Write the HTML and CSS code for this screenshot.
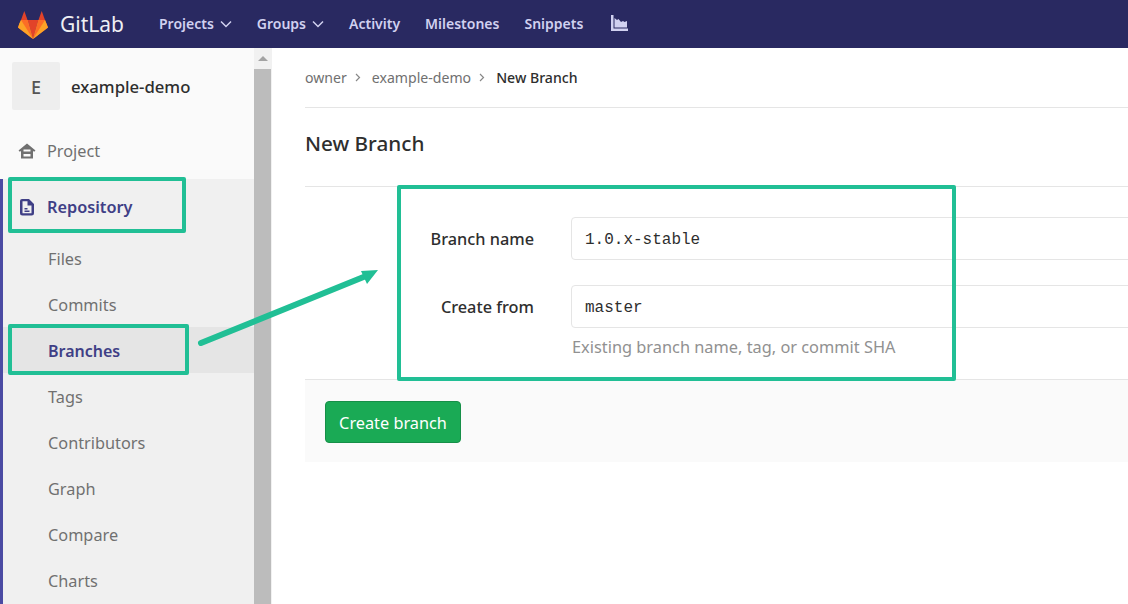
FILE: index.html
```html
<!DOCTYPE html>
<html lang="en">

<head>
    <meta charset="UTF-8">
    <meta name="viewport" content="width=device-width, initial-scale=1.0">
    <title>New Branch</title>
    <link rel="stylesheet" href="styles.css">
</head>

<body>
    <header class="navbar">
        <a class="brand">
            <svg class="brand-logo" width="30" height="28" viewBox="0 0 30 28">
                <path fill="#fc6d26" d="M15 28 0 16.5 3 9z"/>
                <path fill="#fc6d26" d="M15 28 30 16.5 27 9z"/>
                <path fill="#e24329" d="M15 28 9.5 9h11z"/>
                <path fill="#fca326" d="M15 28 0 16.5 1.200 12.800 3 9 9.500 9z"/>
                <path fill="#fc6d26" d="M15 28 3 9h6.500z"/>
                <path fill="#fca326" d="M15 28 30 16.500 27 9 20.500 9z"/>
                <path fill="#fc6d26" d="M15 28 27 9h-6.500z"/>
                <path fill="#e24329" d="M3 9 6.300 0 9.500 9z"/>
                <path fill="#e24329" d="M27 9 23.700 0 20.500 9z"/>
            </svg>
            <span class="brand-name">GitLab</span>
        </a>
        <nav class="nav-links">
            <a>Projects <svg class="chev" width="12" height="8" viewBox="0 0 12 8"><path d="M1 1.500 6 6.500 11 1.500" fill="none" stroke="currentColor" stroke-width="1.500"/></svg></a>
            <a>Groups <svg class="chev" width="12" height="8" viewBox="0 0 12 8"><path d="M1 1.500 6 6.500 11 1.500" fill="none" stroke="currentColor" stroke-width="1.500"/></svg></a>
            <a>Activity</a>
            <a>Milestones</a>
            <a>Snippets</a>
            <a class="chart-link">
                <svg width="17" height="16" viewBox="0 0 17 16"><path fill="currentColor" d="M0 0h2.500v13.500H17V16H0z"/><path fill="currentColor" d="M3.500 12.500V3L6 5l1.500-1 2.500 3 2-1 1.500 1 2.500-1v6.500z"/></svg>
            </a>
        </nav>
    </header>

    <div class="layout">
        <aside class="sidebar">
            <div class="project-head">
                <div class="avatar">E</div>
                <div class="project-name">example-demo</div>
            </div>
            <a class="side-top project-link">
                <svg width="18" height="16" viewBox="0 0 18 16"><path fill="#707070" d="M9 0.500 0.500 7.500 1.800 8.800 3 8V15.500H15V8L16.200 8.800 17.500 7.500zM5.500 6.500h7v2h-7zM5.500 11h7v2.500h-7z" fill-rule="evenodd"/></svg>
                Project
            </a>
            <div class="side-section">
                <a class="side-top active">
                    <svg width="18" height="18" viewBox="0 0 18 18"><path fill="#3f3f86" fill-rule="evenodd" d="M4 1h7l5 5v9a2.500 2.500 0 0 1-2.500 2.500h-9A2.500 2.500 0 0 1 2 15V3a2 2 0 0 1 2-2zM4.500 3.200V15.300h9V7.500H9.500V3.200zM6.500 10h3v1.500h-3zM6.500 12.500h5V14h-5z"/></svg>
                    Repository
                </a>
                <a class="side-item">Files</a>
                <a class="side-item">Commits</a>
                <a class="side-item current">Branches</a>
                <a class="side-item">Tags</a>
                <a class="side-item">Contributors</a>
                <a class="side-item">Graph</a>
                <a class="side-item">Compare</a>
                <a class="side-item">Charts</a>
            </div>
        </aside>
        <div class="scrollbar">
            <div class="scroll-btn"><span class="scroll-arrow"></span></div>
            <div class="scroll-thumb"></div>
        </div>

        <main class="main">
            <div class="breadcrumb">
                <a>owner</a><span class="crumb-sep"><svg width="6" height="9" viewBox="0 0 6 9"><path d="M1 1 4.500 4.500 1 8" fill="none" stroke="#888" stroke-width="1.200"/></svg></span>
                <a>example-demo</a><span class="crumb-sep"><svg width="6" height="9" viewBox="0 0 6 9"><path d="M1 1 4.500 4.500 1 8" fill="none" stroke="#888" stroke-width="1.200"/></svg></span>
                <b>New Branch</b>
            </div>
            <h1 class="page-title">New Branch</h1>
            <form class="branch-form">
                <div class="form-row">
                    <label>Branch name</label>
                    <input type="text" class="mono-input" value="1.0.x-stable">
                </div>
                <div class="form-row">
                    <label>Create from</label>
                    <div class="field">
                        <input type="text" class="mono-input" value="master">
                        <p class="hint">Existing branch name, tag, or commit SHA</p>
                    </div>
                </div>
                <div class="form-actions">
                    <button type="button" class="btn-create">Create branch</button>
                </div>
            </form>
        </main>
    </div>

    <!-- annotation drawn on top of the screenshot -->
    <div class="mark mark-repo"></div>
    <div class="mark mark-branches"></div>
    <div class="mark mark-form"></div>
    <svg class="mark-arrow" width="1128" height="604" viewBox="0 0 1128 604">
        <path d="M201 343 366 276" stroke="#21bf95" stroke-width="6" stroke-linecap="round" fill="none"/>
        <path d="M378 270 361 271 367 284z" fill="#21bf95"/>
    </svg>
</body>

</html>
```

FILE: styles.css
```css
body {
    font-family: 'Noto Sans', 'Open Sans', sans-serif;
    font-size: 16px;
    color: #2e2e2e;
    background-color: #ffffff;
    margin: 0;
    padding: 0;
    height: 604px;
    overflow: hidden;
}

.navbar {
    display: flex;
    align-items: center;
    height: 48px;
    background-color: #292961;
    box-sizing: border-box;
    padding-left: 18px;
}

.brand {
    display: flex;
    align-items: center;
    width: 141px;
}

.brand-logo {
    margin-top: 1px;
}

.brand-name {
    color: #ffffff;
    font-size: 21px;
    margin-left: 12px;
    line-height: 48px;
    opacity: 0.93;
}

.nav-links {
    display: flex;
    align-items: center;
    gap: 25px;
    margin-top: -2px;
}

.nav-links a {
    color: #d1d1f0;
    font-size: 14px;
    font-weight: 600;
    display: flex;
    align-items: center;
    gap: 6px;
}

.chev {
    margin-top: 2px;
}

.nav-links .chart-link {
    margin-left: 3px;
}

.layout {
    display: flex;
    height: 556px;
}

.sidebar {
    width: 254px;
    flex-shrink: 0;
    background-color: #fafafa;
    overflow: hidden;
}

.project-head {
    display: flex;
    align-items: center;
    height: 78px;
    padding-left: 12px;
    gap: 11px;
}

.avatar {
    width: 48px;
    height: 48px;
    box-sizing: border-box;
    padding-top: 2px;
    margin-top: -2px;
    background-color: #eeeeee;
    border-radius: 2px;
    color: #555555;
    font-size: 18px;
    font-weight: 500;
    display: flex;
    align-items: center;
    justify-content: center;
}

.project-name {
    font-size: 16.700px;
    font-weight: 500;
    color: #2e2e2e;
    margin-top: -2px;
}

.side-top {
    display: flex;
    align-items: center;
    height: 53px;
    padding-left: 18px;
    gap: 11px;
    font-size: 16.300px;
    color: #707070;
}

.project-link {
    box-sizing: border-box;
    padding-bottom: 3px;
}

.side-section {
    background-color: #f0f0f0;
    border-left: 3px solid #4b4ba3;
    height: 500px;
}

.side-section .side-top {
    padding-left: 15px;
    height: 56px;
}

.side-top.active {
    color: #3f3f86;
    font-weight: 600;
}

.side-item {
    display: flex;
    align-items: center;
    height: 46px;
    box-sizing: border-box;
    padding-left: 45px;
    padding-top: 1px;
    font-size: 16.300px;
    color: #707070;
}

.side-item.current {
    background-color: #e5e5e5;
    color: #3f3f86;
    font-size: 16px;
    font-weight: 600;
}

.scrollbar {
    width: 18px;
    flex-shrink: 0;
    background-color: #f1f1f1;
}

.scroll-btn {
    height: 21px;
    display: flex;
    align-items: center;
    justify-content: center;
}

.scroll-arrow {
    width: 0;
    height: 0;
    border-left: 5px solid transparent;
    border-right: 5px solid transparent;
    border-bottom: 5px solid #a3a3a3;
}

.scroll-thumb {
    width: 17px;
    height: 535px;
    background-color: #bcbcbc;
}

.main {
    flex: 1;
    min-width: 0;
    padding-left: 33px;
    overflow: hidden;
}

.breadcrumb {
    display: flex;
    align-items: center;
    height: 59px;
    border-bottom: 1px solid #e5e5e5;
    font-size: 14.100px;
    color: #707070;
}

.breadcrumb b {
    font-weight: 500;
    color: #2e2e2e;
}

.crumb-sep {
    display: inline-flex;
    margin: 0 11px 0 8px;
}

.page-title {
    font-size: 20.700px;
    font-weight: 500;
    color: #2e2e2e;
    margin: 0;
    height: 78px;
    line-height: 70px;
    border-bottom: 1px solid #e5e5e5;
}

.branch-form {
    width: 1000px;
}

.form-row {
    display: flex;
    gap: 37px;
    margin-top: 25px;
}

.form-row:first-child {
    margin-top: 30px;
}

.form-row label {
    width: 229px;
    height: 43px;
    flex-shrink: 0;
    text-align: right;
    font-size: 16.300px;
    font-weight: 500;
    line-height: 45px;
    color: #2e2e2e;
}

.field {
    flex: 1;
}

.mono-input {
    flex: 1;
    display: block;
    width: 100%;
    height: 43px;
    box-sizing: border-box;
    border: 1px solid #e5e5e5;
    border-radius: 4px;
    padding: 2px 13px 0;
    font-family: 'Liberation Mono', 'DejaVu Sans Mono', monospace;
    font-size: 16px;
    color: #2e2e2e;
    background-color: #ffffff;
}

.hint {
    margin: 7px 0 0 1px;
    font-size: 16.350px;
    line-height: 24px;
    color: #919191;
}

.form-actions {
    margin-top: 20px;
    height: 83px;
    box-sizing: border-box;
    padding: 21px 20px;
    background-color: #fafafa;
    border-top: 1px solid #e5e5e5;
}

.btn-create {
    width: 136px;
    height: 42px;
    padding: 2px 0 0;
    background-color: #1aaa55;
    border: 1px solid #168f48;
    border-radius: 4px;
    color: #ffffff;
    font-family: inherit;
    font-size: 16.300px;
}

.mark {
    position: absolute;
    box-sizing: border-box;
    border: 4px solid #21bf95;
    border-radius: 2px;
}

.mark-repo {
    left: 8px;
    top: 177px;
    width: 178px;
    height: 56px;
}

.mark-branches {
    left: 8px;
    top: 324px;
    width: 181px;
    height: 51px;
}

.mark-form {
    left: 397px;
    top: 185px;
    width: 559px;
    height: 196px;
}

.mark-arrow {
    position: absolute;
    left: 0;
    top: 0;
    pointer-events: none;
}
```
